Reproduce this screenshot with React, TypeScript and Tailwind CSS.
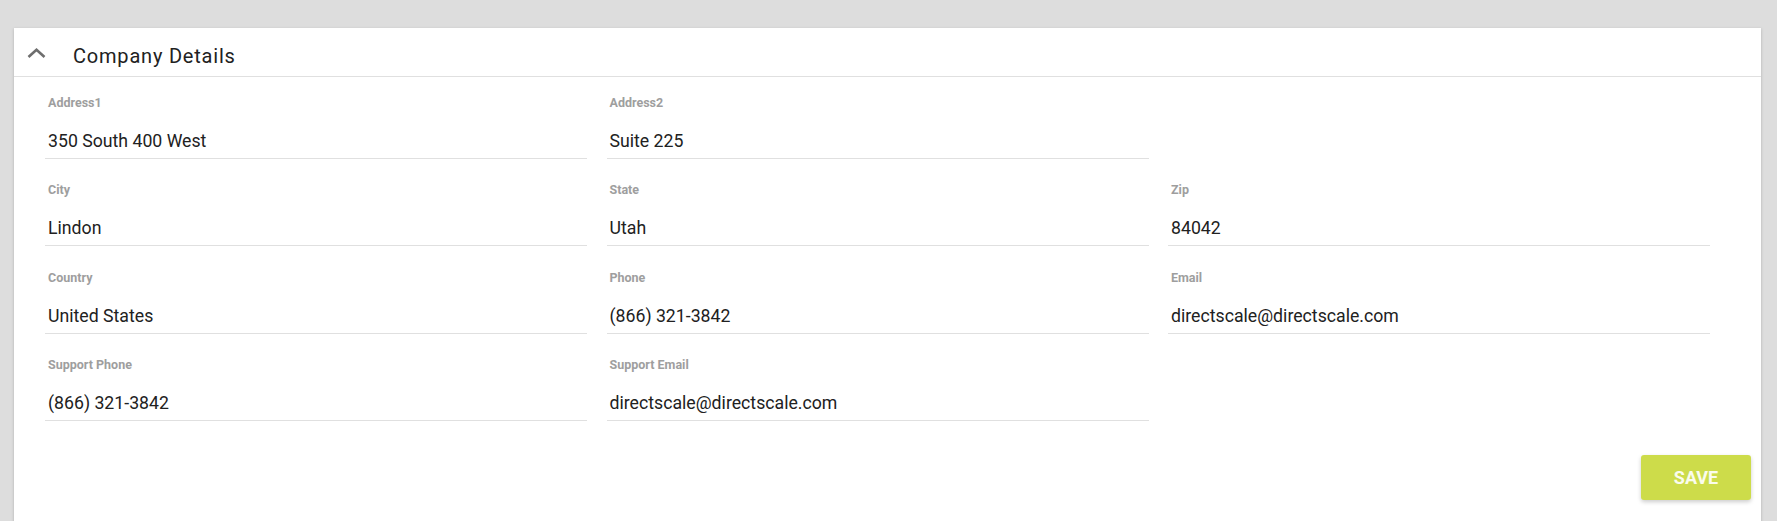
import React from 'react';

type Field = { label: string; value: string } | null;

const rows: Field[][] = [
  [
    { label: 'Address1', value: '350 South 400 West' },
    { label: 'Address2', value: 'Suite 225' },
    null,
  ],
  [
    { label: 'City', value: 'Lindon' },
    { label: 'State', value: 'Utah' },
    { label: 'Zip', value: '84042' },
  ],
  [
    { label: 'Country', value: 'United States' },
    { label: 'Phone', value: '(866) 321-3842' },
    { label: 'Email', value: 'directscale@directscale.com' },
  ],
  [
    { label: 'Support Phone', value: '(866) 321-3842' },
    { label: 'Support Email', value: 'directscale@directscale.com' },
    null,
  ],
];

function FieldBox({ field }: { field: Field }) {
  if (!field) return <div />;
  return (
    <div>
      <div className="h-4 pl-[3px] text-[12.5px] leading-4 font-bold text-[#9e9e9e]">{field.label}</div>
      <div className="mt-[18px] pl-[3px] pb-[5px] text-[17.7px] leading-6 text-[#212121] border-b border-[#e0e0e0]">
        {field.value}
      </div>
    </div>
  );
}

export default function App() {
  return (
    <div className="min-h-[521px] bg-[#dddddd] pt-[28px] pl-[14px] pr-[16px] font-['Roboto','Liberation_Sans',sans-serif]">
      <div className="bg-white shadow-[0_1px_3px_rgba(0,0,0,0.2)] pb-10">
        {/* header */}
        <div className="h-[49px] flex items-center border-b border-[#e0e0e0]">
          <svg width="19" height="11" viewBox="0 0 19 11" className="ml-[13px] mt-[2px]">
            <polyline points="1.5,9 9.5,1.8 17.5,9" fill="none" stroke="#6e6e6e" strokeWidth="2.6" />
          </svg>
          <span className="ml-[27px] pt-2 text-[20px] leading-6 tracking-[0.8px] text-[#212121]">Company Details</span>
        </div>

        {/* body */}
        <div className="pl-[31px] pt-[18px]">
          <div className="grid grid-cols-[542px_542px_542px] gap-x-[19.5px] gap-y-[23.3px]">
            {rows.flat().map((f, i) => (
              <FieldBox key={i} field={f} />
            ))}
          </div>
        </div>

        <div className="flex justify-end pr-[10px] mt-[34px]">
          <button className="w-[110px] h-[45px] rounded-[3px] bg-[#cddc4a] text-white/90 text-[18px] font-bold uppercase shadow-[0_2px_4px_rgba(0,0,0,0.2)]">
            Save
          </button>
        </div>
      </div>
    </div>
  );
}
